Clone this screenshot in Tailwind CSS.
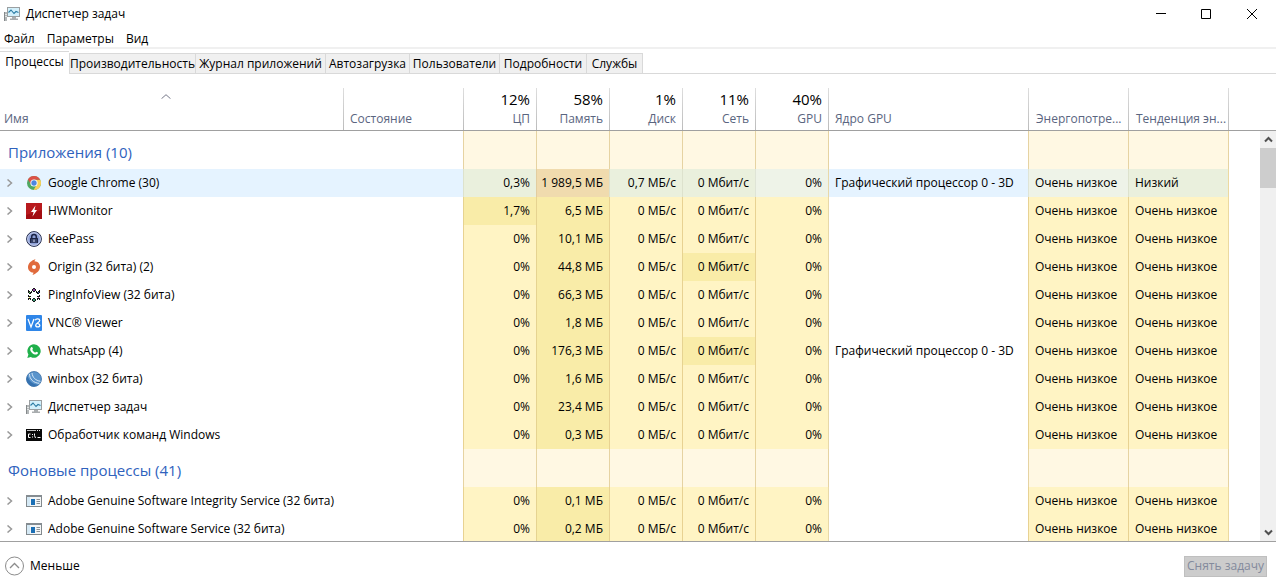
<!DOCTYPE html>
<html lang="ru">
<head>
<meta charset="utf-8">
<title>Диспетчер задач</title>
<script src="https://cdn.jsdelivr.net/npm/@tailwindcss/browser@4"></script>
</head>
<body class="flex h-screen flex-col overflow-hidden bg-white font-['Open_Sans','Noto_Sans',sans-serif] text-[12px] leading-4 text-black">

<svg class="hidden" aria-hidden="true">
  <symbol id="taskmgr" viewBox="0 0 16 16">
    <path d="M0 6h3v9H0z" fill="#b4b8b9"/><path d="M.5 6v9" stroke="#85898b"/><path d="M1 8.500h2M1 10.500h2" stroke="#e3e6e6"/>
    <rect x="3.500" y="1.500" width="12" height="9" fill="#d3f0fb" stroke="#9a9fa1"/>
    <path d="M4.500 6.500 7 4 10 7.500 12 5.500 14.500 6.500" fill="none" stroke="#2a7ba3" stroke-width="1.100"/>
    <path d="M8 11h4v1.500h2V14H6v-1.500h2z" fill="#a9adaf"/>
  </symbol>
  <symbol id="chrome" viewBox="0 0 16 16">
    <circle cx="8" cy="8" r="7" fill="#4fa862"/>
    <path d="M8 4.800h6.230A7 7 0 0 1 7.600 15l3.200-5.400z" fill="#fbd05a"/>
    <path d="M1.940 4.500A7 7 0 0 1 14.200 4.800H8L5.200 9.600z" fill="#dc5147"/>
    <circle cx="8" cy="8" r="3.600" fill="#fff"/><circle cx="8" cy="8" r="2.700" fill="#4f86e0"/>
  </symbol>
  <symbol id="hwm" viewBox="0 0 16 16">
    <rect width="16" height="16" fill="#a30d12"/><path d="M0 0h16v7L0 12z" fill="#b81a1e"/>
    <path d="M9.500 2.500 5 9h2.600L6.500 13.500 11 7H8.500z" fill="#fff"/>
  </symbol>
  <symbol id="keepass" viewBox="0 0 16 16">
    <circle cx="8" cy="8" r="7.400" fill="#8c9fd6" stroke="#242c4a"/><circle cx="8" cy="8" r="6.300" fill="none" stroke="#c9d1ee"/>
    <path d="M5.700 8V5.800a2.300 2.300 0 0 1 4.600 0V8" fill="none" stroke="#1c2445" stroke-width="1.500"/>
    <rect x="4" y="7" width="8" height="5" rx=".5" fill="#1c2445"/><path d="M5 9h6M5 11h6" stroke="#7383b8" stroke-width=".6"/><path d="M8 8.500v2.500" stroke="#dbe2fa"/>
  </symbol>
  <symbol id="origin" viewBox="0 0 16 16">
    <path d="M9.500 0 8.400 2.200C12 2.300 14.200 5 14 8.200 13.700 12 10.500 14.300 6.500 16l1.100-2.300C4 13.600 1.800 11 2 7.800 2.300 4 5.500 1.600 9.500 0z" fill="#e06a3c"/>
    <circle cx="8" cy="8" r="2" fill="#fff"/>
  </symbol>
  <symbol id="ping" viewBox="0 0 16 16">
    <g fill="#161616">
      <path d="M7 1h2v1h1v2H9v1H7V4H6V2h1z"/><path d="M7 11h2v1h1v2H9v1H7v-1H6v-2h1z"/>
      <path d="M2 3h1v1h1v1h1V4h1v2H5v1H3V6H2z"/><path d="M14 3h-1v1h-1v1h-1V4h-1v2h1v1h2V6h1z"/>
      <path d="M2 8h1v1h2v1H4v1h1v2H4v-1H3v1H2v-2h1v-1H2z"/><path d="M14 8h-1v1h-2v1h1v1h-1v2h1v-1h1v1h1v-2h-1v-1h1z"/>
    </g>
    <path d="M7 2h2v2H7z" fill="#8a3b9f"/><path d="M7 12h2v2H7z" fill="#3f9a78"/>
    <path d="M3 5h1v1H3z" fill="#4bb04f"/><path d="M12 5h1v1h-1z" fill="#3556c0"/><path d="M3 10h1v1H3z" fill="#d8cf42"/><path d="M12 10h1v1h-1z" fill="#b63c8c"/>
  </symbol>
  <symbol id="vnc" viewBox="0 0 16 16">
    <rect width="16" height="16" rx="1" fill="#2f86e8"/>
    <path d="M2 4 5 12 8 4" fill="none" stroke="#fff" stroke-width="1.300"/>
    <path d="M9.300 5.200C9.800 3.600 13.700 3.400 13.700 5.600 13.700 7.600 9.700 8 9.700 10.300c0 2.200 4.100 2.200 4.100 0 0-1.300-1.200-1.600-2.500-1.900" fill="none" stroke="#fff" stroke-width="1.300"/>
  </symbol>
  <symbol id="whatsapp" viewBox="0 0 16 16">
    <path d="M8 1.300a6.700 6.700 0 1 1-3.200 12.600L1.300 15l1.100-3.500A6.700 6.700 0 0 1 8 1.300z" fill="#20b04b"/>
    <path d="M5.200 4.300c.8-.6 1.200 0 1.700 1.300.2.500-.5 1-.5 1.300.5 1.200 1.600 2.200 2.800 2.700.4 0 .8-.9 1.200-.8.500.2 1.700.7 1.700 1-.2 1.500-1.700 2.100-3.200 1.700C6.300 10.700 4 8.300 4.200 6c0-.7.500-1.300 1-1.700z" fill="#fff"/>
  </symbol>
  <symbol id="winbox" viewBox="0 0 16 16">
    <circle cx="8" cy="8" r="7.500" fill="#5a94cc" stroke="#3b6fa5" stroke-width=".8"/>
    <path d="M1.500 5A7 7 0 0 0 12 13.800C7 13.500 3 10 1.500 5z" fill="#3672b0"/>
    <path d="M3.500 3C3.500 8 7.500 12 13.300 12.300M6 2c.5 4.500 3.500 7.500 8.500 8.300" fill="none" stroke="#d5e7f7" stroke-width="1"/>
  </symbol>
  <symbol id="cmd" viewBox="0 0 16 16">
    <path d="M0 2h16v12H0z" fill="#080808"/><path d="M1 3h9v1H1z" fill="#c4c4c4"/><path d="M11 3h1v1h-1zM13 3h1v1h-1z" fill="#eee"/>
    <path d="M4.500 7H2.500v3.500h2M6.500 7v1M6.500 9.500v1M8.500 6.500v2l1 2.500M11.500 10.500h3" fill="none" stroke="#fff"/>
  </symbol>
  <symbol id="service" viewBox="0 0 16 16">
    <rect x=".5" y="2.500" width="15" height="11" fill="#f4f6f7" stroke="#82898d"/><path d="M0 2h16v2H0z" fill="#858c91"/>
    <path d="M1 4h3v9H1z" fill="#d5e9f5"/><path d="M5 6h4v6H5z" fill="#1b6fb5"/><path d="M10.500 6.500H14M10.500 8.500H14M10.500 10.500H14" stroke="#8b9195"/>
  </symbol>
</svg>

<header>
  <div class="flex h-7 items-center">
    <svg class="ml-1 mr-1.5 size-4"><use href="#taskmgr"/></svg>
    <h1 class="flex-1">Диспетчер задач</h1>
    <button aria-label="Свернуть" class="flex h-7 w-[46px] items-center justify-center"><svg class="size-[10px]" viewBox="0 0 10 10"><path d="M0 4.500h10" stroke="#000"/></svg></button>
    <button aria-label="Развернуть" class="flex h-7 w-11 items-center justify-center"><svg class="size-[10px]" viewBox="0 0 10 10"><path d="M.5.5h9v9h-9z" fill="none" stroke="#000"/></svg></button>
    <button aria-label="Закрыть" class="flex h-7 w-12 items-center justify-center"><svg class="size-[10px]" viewBox="0 0 10 10"><path d="m0 0 10 10M10 0 0 10" stroke="#000"/></svg></button>
  </div>
  <nav class="flex h-[21px] items-center gap-3 border-b-2 border-[#f0f0f0] px-1 pt-0.5">
    <button>Файл</button><button>Параметры</button><button>Вид</button>
  </nav>
</header>

<div role="tablist" class="mt-0.5 flex h-[23px] items-end whitespace-nowrap">
  <button role="tab" aria-selected="true" class="h-full w-[69px] border-t border-[#d9d9d9] pb-0.5">Процессы</button>
  <button role="tab" class="h-[21px] w-[127px] border border-[#d9d9d9] bg-[#f0f0f0]">Производительность</button>
  <button role="tab" class="h-[21px] w-[130px] border border-l-0 border-[#d9d9d9] bg-[#f0f0f0]">Журнал приложений</button>
  <button role="tab" class="h-[21px] w-[84px] border border-l-0 border-[#d9d9d9] bg-[#f0f0f0]">Автозагрузка</button>
  <button role="tab" class="h-[21px] w-[90px] border border-l-0 border-[#d9d9d9] bg-[#f0f0f0]">Пользователи</button>
  <button role="tab" class="h-[21px] w-[87px] border border-l-0 border-[#d9d9d9] bg-[#f0f0f0]">Подробности</button>
  <button role="tab" class="h-[21px] w-[56px] border border-l-0 border-[#d9d9d9] bg-[#f0f0f0]">Службы</button>
  <span class="h-px flex-1 bg-[#d9d9d9]"></span>
</div>

<main class="flex min-h-0 flex-1 items-start overflow-hidden">
  <table class="min-w-0 flex-1 table-fixed border-separate border-spacing-0 whitespace-nowrap">
    <colgroup>
      <col class="w-[343px]"><col class="w-[120px]"><col class="w-[73px]"><col class="w-[73px]"><col class="w-[73px]"><col class="w-[73px]"><col class="w-[73px]"><col class="w-[200px]"><col class="w-[100px]"><col class="w-[100px]"><col>
    </colgroup>
    <thead id="head"></thead>
    <tbody id="body"></tbody>
  </table>
  <div class="flex w-4 flex-col self-stretch">
    <div class="h-[57px] border-b border-[#a0a0a0]"></div>
    <div class="flex flex-1 flex-col bg-[#f0f0f0]">
      <button aria-label="Прокрутить вверх" class="flex h-[17px] items-center justify-center"><svg class="size-[9px]" viewBox="0 0 9 9"><path d="M1 6.500 4.500 3 8 6.500" fill="none" stroke="#505050" stroke-width="2"/></svg></button>
      <div class="h-10 bg-[#cdcdcd]"></div>
      <button aria-label="Прокрутить вниз" class="mt-auto flex h-[17px] items-center justify-center"><svg class="size-[9px]" viewBox="0 0 9 9"><path d="M1 2.500 4.500 6 8 2.500" fill="none" stroke="#505050" stroke-width="2"/></svg></button>
    </div>
  </div>
</main>

<footer class="flex h-[47px] items-center justify-between border-t border-[#a0a0a0] pt-0.5 pl-1 pr-[9px]">
  <button class="flex items-center gap-1.5">
    <svg class="size-5" viewBox="0 0 20 20" fill="none"><circle cx="10.500" cy="10" r="9" stroke="#8c8c8c"/><path d="M6 12l4.500-4.500L15 12" stroke="#8c8c8c" stroke-width="1.300"/></svg>
    Меньше
  </button>
  <button disabled class="h-[21px] w-[83px] border border-[#bfbfbf] bg-[#cccccc] text-[#838a9c]">Снять задачу</button>
</footer>

<script>
const sort = '<svg class="mx-auto mb-3 h-[5px] w-[10px]" viewBox="0 0 10 5"><path d="M.5 4.700 5 .7l4.500 4" fill="none" stroke="#77798a"/></svg>';
const line = '<span class="absolute bottom-0 left-0 h-[42px] w-px bg-linear-to-b from-[#dedede] to-[#bcbcbc]"></span>';
// Header columns: caption, load, text side
const heads = [['Имя', '', 'name'], ['Состояние', '', 'left'], ['ЦП', '12%', 'right'], ['Память', '58%', 'right'], ['Диск', '1%', 'right'], ['Сеть', '11%', 'right'], ['GPU', '40%', 'right'], ['Ядро GPU', '', 'left'], ['Энергопотре...', '', 'power'], ['Тенденция эн...', '', 'power'], ['', '', 'left']];
const side = { name: 'text-left pl-1 pr-4', left: 'text-left pl-[7px]', right: 'text-right pr-1.5', power: 'text-left pl-2' };
document.getElementById('head').innerHTML = '<tr>' + heads.map(([t, n, s]) =>
  `<th scope="col" class="relative h-[57px] border-b border-[#a0a0a0] pb-[3px] align-bottom font-normal text-[#5a6580] ${side[s]}">${s === 'name' ? sort : line}${n ? `<div class="text-[15px] leading-6 text-black">${n}</div>` : ''}${t}</th>`).join('') + '</tr>';

const rows = [
  'Приложения (10)',
  ['chrome', 'Google Chrome (30)', '0,3%', '1 989,5 МБ', '0,7 МБ/с', 1],
  ['hwm', 'HWMonitor', '1,7%', '6,5 МБ', '0 МБ/с', 0],
  ['keepass', 'KeePass', '0%', '10,1 МБ', '0 МБ/с', 0],
  ['origin', 'Origin (32 бита) (2)', '0%', '44,8 МБ', '0 МБ/с', 0, 'net'],
  ['ping', 'PingInfoView (32 бита)', '0%', '66,3 МБ', '0 МБ/с', 0],
  ['vnc', 'VNC® Viewer', '0%', '1,8 МБ', '0 МБ/с', 0],
  ['whatsapp', 'WhatsApp (4)', '0%', '176,3 МБ', '0 МБ/с', 1, 'net'],
  ['winbox', 'winbox (32 бита)', '0%', '1,6 МБ', '0 МБ/с', 0],
  ['taskmgr', 'Диспетчер задач', '0%', '23,4 МБ', '0 МБ/с', 0],
  ['cmd', 'Обработчик команд Windows', '0%', '0,3 МБ', '0 МБ/с', 0],
  'Фоновые процессы (41)',
  ['service', 'Adobe Genuine Software Integrity Service (32 бита)', '0%', '0,1 МБ', '0 МБ/с', 0],
  ['service', 'Adobe Genuine Software Service (32 бита)', '0%', '0,2 МБ', '0 МБ/с', 0],
];
const tone = { group: 'bg-[#fff8e3] border-[#e6d3a2]', low: 'bg-[#fff4c4] border-[#e8d292]', mid: 'bg-[#f9eca8] border-[#e6d391]', sel: 'bg-[#eaf0dd] border-[#dde2cd]', selLow: 'bg-[#eef3e8] border-[#dfe4d6]', selHigh: 'bg-[#f0dbae] border-[#e2cda0]' };
const td = (t, c, a) => `<td class="border-l p-0 ${c} ${a}">${t}</td>`;
const R = 'text-right pr-1.5', L = 'text-left pl-1.5';
document.getElementById('body').innerHTML = rows.map(r => {
  if (typeof r === 'string') {
    const g = td('', tone.group, '');
    return `<tr class="h-[38px]"><th scope="rowgroup" colspan="2" class="p-0 pl-2 pt-1 text-left text-[15px] leading-5 font-normal text-[#2f62bd]">${r}</th>${g.repeat(5)}<td class="border-l border-[#e6d3a2]"></td>${g.repeat(2)}<td class="border-l border-[#e6d3a2]"></td></tr>`;
  }
  const [icon, name, cpu, mem, disk, core, net] = r, sel = icon === 'chrome';
  const low = sel ? tone.sel : tone.low, last = sel ? tone.selLow : tone.low, plain = sel ? 'bg-[#e5f3ff]' : '';
  return `<tr class="h-7"><th scope="row" class="p-0 text-left font-normal ${plain}"><div class="flex items-center pl-1.5"><button aria-label="Развернуть ${name.replace('®', '')}" class="mr-3"><svg class="block size-2" viewBox="0 0 8 8"><path d="M1.500.5 5.500 4 1.500 7.500" fill="none" stroke="#999" stroke-width="1.500"/></svg></button><svg class="mr-1.5 size-4 shrink-0"><use href="#${icon}"/></svg>${name}</div></th><td class="${plain}"></td>`
    + td(cpu, cpu === '1,7%' ? tone.mid : low, R) + td(mem, sel ? tone.selHigh : tone.mid, R) + td(disk, low, R)
    + td('0 Мбит/с', net ? tone.mid : low, R) + td('0%', last, R)
    + td(core ? 'Графический процессор 0 - 3D' : '', plain + ' border-[#e8d8a8]', L)
    + td('Очень низкое', last, L) + td(sel ? 'Низкий' : 'Очень низкое', low, L) + '<td class="border-l border-[#ecd9a0]"></td></tr>';
}).join('');
</script>
</body>
</html>
